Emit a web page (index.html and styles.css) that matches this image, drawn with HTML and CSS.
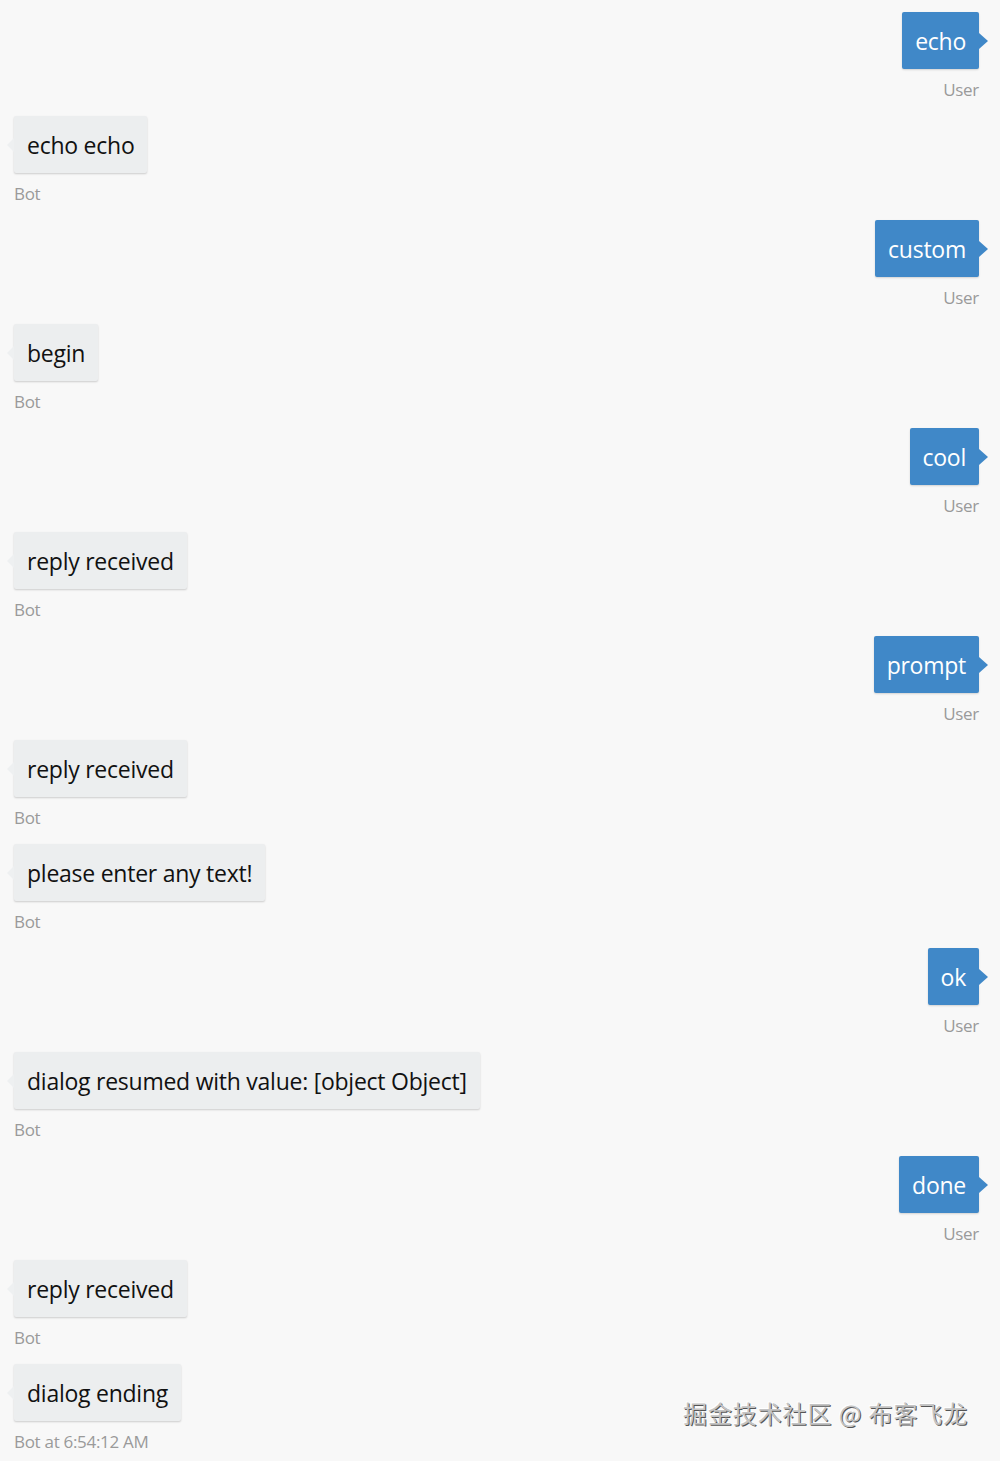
FILE: index.html
```html
<!DOCTYPE html>
<html lang="en">
<head>
<meta charset="utf-8">
<title>Chat</title>
<link rel="stylesheet" href="styles.css">
</head>
<body>
<div class="chat">
  <div class="msg user"><div class="bubble">echo</div><div class="from">User</div></div>
  <div class="msg bot"><div class="bubble">echo echo</div><div class="from">Bot</div></div>
  <div class="msg user"><div class="bubble">custom</div><div class="from">User</div></div>
  <div class="msg bot"><div class="bubble">begin</div><div class="from">Bot</div></div>
  <div class="msg user"><div class="bubble">cool</div><div class="from">User</div></div>
  <div class="msg bot"><div class="bubble">reply received</div><div class="from">Bot</div></div>
  <div class="msg user"><div class="bubble">prompt</div><div class="from">User</div></div>
  <div class="msg bot"><div class="bubble">reply received</div><div class="from">Bot</div></div>
  <div class="msg bot"><div class="bubble">please enter any text!</div><div class="from">Bot</div></div>
  <div class="msg user"><div class="bubble">ok</div><div class="from">User</div></div>
  <div class="msg bot"><div class="bubble">dialog resumed with value: [object Object]</div><div class="from">Bot</div></div>
  <div class="msg user"><div class="bubble">done</div><div class="from">User</div></div>
  <div class="msg bot"><div class="bubble">reply received</div><div class="from">Bot</div></div>
  <div class="msg bot"><div class="bubble">dialog ending</div><div class="from">Bot at 6:54:12 AM</div></div>
</div>
<div class="watermark">掘金技术社区 @ 布客飞龙</div>
</body>
</html>
```
FILE: styles.css
```css
html, body {
  margin: 0;
  padding: 0;
  background: #f8f8f8;
}
body {
  font-family: "Open Sans", "Noto Sans", "Noto Sans CJK SC", sans-serif;
  position: relative;
  height: 1461px;
  overflow: hidden;
}
.chat {
  display: flex;
  flex-direction: column;
  gap: 15px;
  padding: 12px 21px 0 14px;
}
.msg {
  display: flex;
  flex-direction: column;
}
.msg.user { align-items: flex-end; }
.msg.bot { align-items: flex-start; }
.bubble {
  position: relative;
  height: 57px;
  box-sizing: border-box;
  display: flex;
  align-items: center;
  padding: 0 13px;
  font-size: 23px;
  letter-spacing: -0.25px;
  border-radius: 2px;
}
.user .bubble {
  background: #4088c8;
  color: #fff;
  box-shadow: 0 1px 2px rgba(0,0,0,0.15);
}
.user .bubble::after {
  content: "";
  position: absolute;
  right: -9px;
  top: 50%;
  margin-top: -8px;
  border-style: solid;
  border-width: 8px 0 8px 9px;
  border-color: transparent transparent transparent #4088c8;
}
.bot .bubble {
  background: #eceeef;
  color: #111;
  box-shadow: 0 1px 2px rgba(0,0,0,0.18);
}
.bot .bubble::before {
  content: "";
  position: absolute;
  left: -7px;
  top: 50%;
  margin-top: -7px;
  border-style: solid;
  border-width: 7px 7px 7px 0;
  border-color: transparent #eef0f1 transparent transparent;
}
.from {
  margin-top: 9px;
  height: 23px;
  line-height: 23px;
  font-size: 17px;
  letter-spacing: -0.3px;
  color: #9a9a9a;
}
.watermark {
  position: absolute;
  left: 683px;
  top: 1396px;
  font-size: 24px;
  line-height: 34px;
  color: #c4c4c4;
  font-family: "Noto Sans CJK SC", "Noto Sans", sans-serif;
  text-shadow: 1px 1px 0 #555, -1px -1px 0 #fff;
  letter-spacing: 0.9px;
}
```
